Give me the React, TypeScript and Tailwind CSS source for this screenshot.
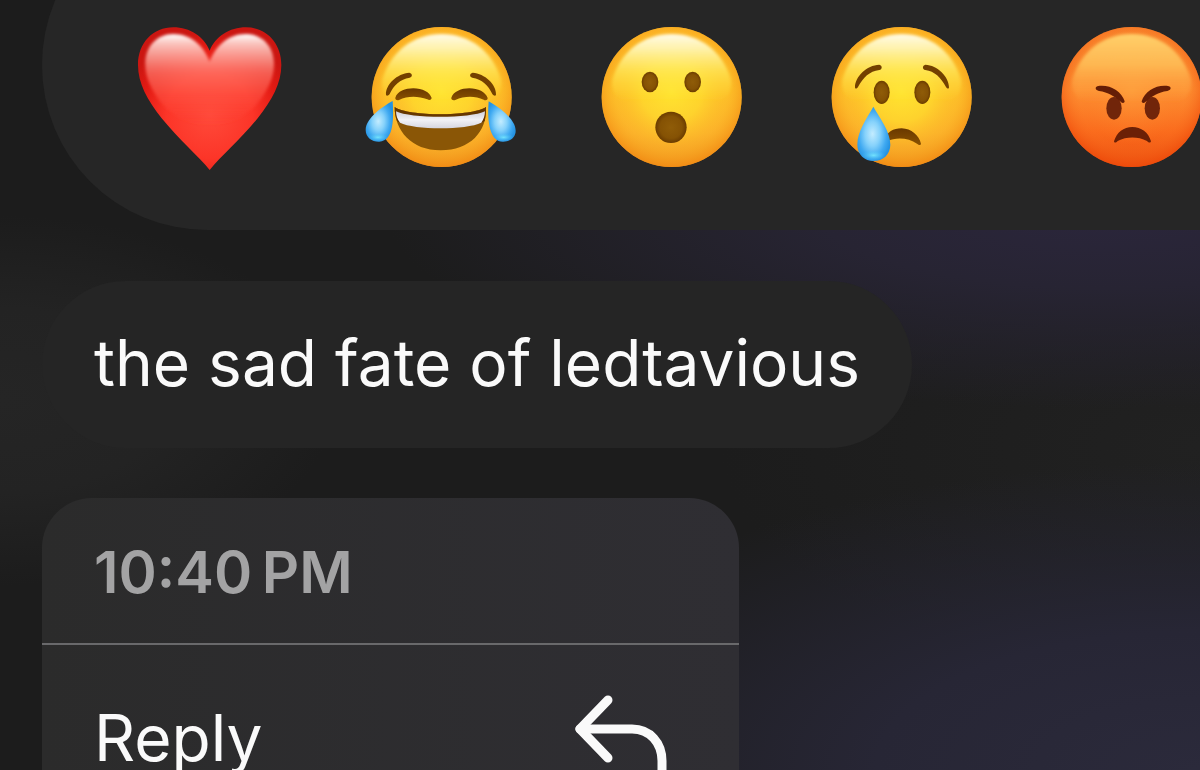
import React from 'react';

// shared fills for every emoji, referenced by id
const EmojiDefs: React.FC = () => (
  <svg className="absolute w-0 h-0" aria-hidden="true">
    <defs>
      <linearGradient id="face" x1="0" y1="0" x2="0" y2="1">
        <stop offset="0" stopColor="#fdb924" />
        <stop offset="0.45" stopColor="#fdc527" />
        <stop offset="0.75" stopColor="#fbb02a" />
        <stop offset="1" stopColor="#ee9420" />
      </linearGradient>
      <radialGradient id="faceEdge" cx="0.5" cy="0.46" r="0.54">
        <stop offset="0" stopColor="#ffe431" />
        <stop offset="0.4" stopColor="#ffd92e" stopOpacity="0.8" />
        <stop offset="0.74" stopColor="#fdb82a" stopOpacity="0.4" />
        <stop offset="1" stopColor="#f28a12" stopOpacity="0.8" />
      </radialGradient>
      <linearGradient id="faceShine" x1="0" y1="0" x2="0" y2="1">
        <stop offset="0" stopColor="#fffbe8" />
        <stop offset="0.2" stopColor="#fff6b4" stopOpacity="0.92" />
        <stop offset="0.5" stopColor="#ffef60" stopOpacity="0.6" />
        <stop offset="0.9" stopColor="#ffe431" stopOpacity="0" />
      </linearGradient>
      <linearGradient id="angry" x1="0" y1="0" x2="0" y2="1">
        <stop offset="0" stopColor="#f88a2f" />
        <stop offset="0.45" stopColor="#fd9233" />
        <stop offset="0.75" stopColor="#fa6a1c" />
        <stop offset="1" stopColor="#ea4a0c" />
      </linearGradient>
      <radialGradient id="angryEdge" cx="0.5" cy="0.46" r="0.54">
        <stop offset="0" stopColor="#ffa03c" stopOpacity="0.6" />
        <stop offset="0.7" stopColor="#fb7a25" stopOpacity="0.1" />
        <stop offset="1" stopColor="#ee4a0a" stopOpacity="0.75" />
      </radialGradient>
      <linearGradient id="angryShine" x1="0" y1="0" x2="0" y2="1">
        <stop offset="0" stopColor="#ffd06a" />
        <stop offset="0.4" stopColor="#ffc25a" stopOpacity="0.8" />
        <stop offset="0.9" stopColor="#ffa340" stopOpacity="0" />
      </linearGradient>
      <linearGradient id="brown" x1="0" y1="0" x2="0" y2="1">
        <stop offset="0" stopColor="#693800" />
        <stop offset="1" stopColor="#8a5200" />
      </linearGradient>
      <radialGradient id="mouth">
        <stop offset="0" stopColor="#8f5c08" />
        <stop offset="0.7" stopColor="#855204" />
        <stop offset="1" stopColor="#6b3c00" />
      </radialGradient>
      <linearGradient id="teeth" x1="0" y1="0" x2="0" y2="1">
        <stop offset="0" stopColor="#cfcfd8" />
        <stop offset="0.5" stopColor="#f2f2f6" />
        <stop offset="1" stopColor="#d6d6e0" />
      </linearGradient>
      <radialGradient id="tear" cx="0.46" cy="0.5" r="0.56">
        <stop offset="0" stopColor="#c3ecff" />
        <stop offset="0.4" stopColor="#86d2fb" />
        <stop offset="0.75" stopColor="#3fa9f1" />
        <stop offset="1" stopColor="#2593e2" />
      </radialGradient>
      <radialGradient id="tearGlow">
        <stop offset="0" stopColor="#7ff0ff" stopOpacity="0.8" />
        <stop offset="1" stopColor="#4fc4f8" stopOpacity="0" />
      </radialGradient>
      <radialGradient id="heart" cx="0.5" cy="0.62" r="0.6">
        <stop offset="0" stopColor="#ff4a3a" />
        <stop offset="0.5" stopColor="#fc3528" />
        <stop offset="0.8" stopColor="#e21a13" />
        <stop offset="1" stopColor="#cb1611" />
      </radialGradient>
      <linearGradient id="heartShine" x1="0" y1="0" x2="0" y2="1">
        <stop offset="0" stopColor="#ffffff" />
        <stop offset="0.1" stopColor="#ffd9d2" stopOpacity="0.9" />
        <stop offset="0.4" stopColor="#ff8073" stopOpacity="0.7" />
        <stop offset="0.65" stopColor="#ff5a4a" stopOpacity="0.55" />
        <stop offset="1" stopColor="#ff4334" stopOpacity="0" />
      </linearGradient>
      <filter id="soft" x="-10%" y="-10%" width="120%" height="120%">
        <feGaussianBlur stdDeviation="5" />
      </filter>
    </defs>
  </svg>
);

const Face: React.FC<{ angry?: boolean }> = ({ angry }) => (
  <>
    <circle cx="275" cy="261" r="210" fill={angry ? 'url(#angry)' : 'url(#face)'} />
    <circle cx="275" cy="261" r="210" fill={angry ? 'url(#angryEdge)' : 'url(#faceEdge)'} />
    <path
      d="M275 72C190 72 124 124 98 205C82 265 150 300 275 300S468 265 452 205C426 124 360 72 275 72Z"
      fill={angry ? 'url(#angryShine)' : 'url(#faceShine)'}
      filter="url(#soft)"
    />
  </>
);

const Heart: React.FC = () => (
  <>
    <path
      d="M269 480C235 438 178 390 125 325C82 270 54 220 54 165C54 98 100 52 160 52C210 52 252 80 269 122C286 80 328 52 378 52C438 52 484 98 484 165C484 220 456 270 413 325C360 390 303 438 269 480Z"
      fill="url(#heart)"
    />
    <path
      d="M269 155C250 105 210 72 160 72C112 72 76 108 76 162C76 205 95 240 125 280C160 320 220 350 269 350S378 320 413 280C443 240 462 205 462 162C462 108 426 72 378 72C328 72 288 105 269 155Z"
      fill="url(#heartShine)"
      filter="url(#soft)"
    />
  </>
);

const Joy: React.FC = () => (
  <>
    <Face />
    <path d="M108 254C106 224 142 190 178 188C188 190 188 201 179 203C150 208 131 226 119 252C115 258 109 259 108 254Z" fill="#734000" />
    <path d="M438 254C440 224 404 190 368 188C358 190 358 201 367 203C396 208 415 226 427 252C431 258 437 259 438 254Z" fill="#734000" />
    <path d="M136 263C142 244 166 235 190 235C217 235 240 247 245 264C244 270 238 271 232 268C204 257 172 257 147 270C140 272 135 269 136 263Z" fill="url(#brown)" />
    <path d="M304 263C310 245 334 235 358 235C384 235 407 246 413 264C413 270 407 273 401 269C376 257 343 257 316 270C308 272 303 269 304 263Z" fill="url(#brown)" />
    <path d="M134 291C175 320 365 320 408 291C412 365 360 421 272 421S134 362 134 291Z" fill="#8a5606" />
    <path d="M134 291C175 320 365 320 408 291C408 308 407 320 404 333C370 360 176 360 141 333C136 320 134 308 134 291Z" fill="#663700" />
    <path d="M138 304C180 326 362 326 405 304C405 316 401 328 394 338C350 360 192 360 150 338C142 328 138 316 138 304Z" fill="url(#teeth)" />
    <path d="M128 273C106 285 47 322 47 360C47 384 68 396 88 395C133 393 131 320 128 273Z" fill="url(#tear)" />
    <path d="M416 274C438 286 497 325 497 362C497 384 477 396 458 395C414 393 412 320 416 274Z" fill="url(#tear)" />
    <ellipse cx="84" cy="382" rx="30" ry="12" fill="url(#tearGlow)" />
    <ellipse cx="461" cy="382" rx="30" ry="12" fill="url(#tearGlow)" />
  </>
);

const Surprised: React.FC = () => (
  <>
    <Face />
    <ellipse cx="210" cy="216" rx="25" ry="31" fill="url(#mouth)" />
    <ellipse cx="338" cy="216" rx="25" ry="31" fill="url(#mouth)" />
    <circle cx="273" cy="352" r="47" fill="url(#mouth)" />
  </>
);

const Crying: React.FC = () => (
  <>
    <Face />
    <path d="M135 232C135 200 170 165 208 164C217 166 218 178 208 180C178 184 160 202 144 231C140 237 135 237 135 232Z" fill="#734000" />
    <path d="M417 232C417 200 382 165 346 164C337 166 336 178 346 180C374 184 392 202 408 231C412 237 417 237 417 232Z" fill="#734000" />
    <ellipse cx="215" cy="247" rx="24" ry="35" fill="url(#mouth)" />
    <ellipse cx="337" cy="247" rx="24" ry="35" fill="url(#mouth)" />
    <path d="M222 390C232 366 249 355 275 355C304 356 327 376 333 401C332 407 327 406 321 401C296 382 257 381 232 393Z" fill="url(#brown)" />
    <path d="M190 290C170 325 142 365 142 404C142 434 164 453 191 453S241 434 241 404C241 365 210 325 190 290Z" fill="url(#tear)" />
    <ellipse cx="191" cy="436" rx="36" ry="15" fill="url(#tearGlow)" />
  </>
);

const Angry: React.FC = () => (
  <>
    <Face angry />
    <ellipse cx="222" cy="295" rx="23" ry="34" fill="#71250a" />
    <ellipse cx="337" cy="295" rx="23" ry="34" fill="#71250a" />
    <path d="M172 229C206 222 244 242 254 274C253 280 247 280 242 275C222 258 205 247 177 243C166 241 164 232 172 229Z" fill="#641d06" />
    <path d="M387 229C353 222 315 242 305 274C306 280 312 280 317 275C337 258 354 247 382 243C393 241 395 232 387 229Z" fill="#641d06" />
    <path d="M222 394C230 367 251 351 277 351S326 367 333 394C331 400 326 398 321 393C294 379 260 379 233 393C228 398 223 400 222 394Z" fill="#6b2006" />
  </>
);

const reactions = [
  { name: 'Love', art: <Heart /> },
  { name: 'Haha', art: <Joy /> },
  { name: 'Wow', art: <Surprised /> },
  { name: 'Sad', art: <Crying /> },
  { name: 'Angry', art: <Angry /> },
];

const ReplyIcon: React.FC = () => (
  <svg className="w-[92px] h-[86px]" viewBox="0 0 92 86" fill="none" stroke="currentColor" strokeWidth="9" strokeLinecap="round" strokeLinejoin="round" aria-hidden="true">
    <path d="M33 5L5 34L33 63" />
    <path d="M5 34H57C75 34 87 48 87 66V81" />
  </svg>
);

const App: React.FC = () => {
  return (
    <main className="relative h-screen overflow-hidden pl-[42px] bg-[#1c1c1c] font-['Inter','Liberation_Sans',sans-serif] text-[#fafafa] bg-[radial-gradient(ellipse_60%_26%_at_92%_27%,#2b263c_0%,#272433_40%,transparent_100%),radial-gradient(ellipse_60%_40%_at_100%_100%,#2b2a3b_0%,#272635_45%,transparent_100%),radial-gradient(ellipse_40%_30%_at_100%_58%,#212121_0%,transparent_100%),radial-gradient(ellipse_28%_24%_at_0%_52%,#252525_0%,#232323_50%,transparent_100%)]">
      <EmojiDefs />

      {/* Reactions, the bar runs past the top and right edges */}
      <div className="-mt-[100px] h-[330px] rounded-l-full bg-[#262626] pl-[78px] pt-[110px] flex items-start gap-[50px]">
        {reactions.map((reaction) => (
          <button key={reaction.name} type="button" aria-label={reaction.name} className="shrink-0">
            <svg className="w-[180px] h-[180px]" viewBox="0 0 540 540" aria-hidden="true">
              {reaction.art}
            </svg>
          </button>
        ))}
      </div>

      <p className="mt-[51px] w-fit rounded-full bg-[#252525] px-[52px] pt-10 pb-11 text-[64px] leading-[83px] whitespace-nowrap">
        the sad fate of ledtavious
      </p>

      <div className="mt-[50px] w-[697px] rounded-[50px] overflow-hidden bg-linear-to-r from-[#2b2b2b] to-[#2f2e33]">
        <div className="h-[147px] px-[52px] pt-1 flex items-center border-b-2 border-[#69696b] text-[58px] font-semibold text-[#a3a3a4]">
          <time dateTime="22:40">10:40{'\u202f'}PM</time>
        </div>
        <button type="button" className="w-full h-[186px] pl-[52px] pr-[72px] flex items-center justify-between text-[64px]">
          Reply
          <ReplyIcon />
        </button>
      </div>
    </main>
  );
};

export default App;
